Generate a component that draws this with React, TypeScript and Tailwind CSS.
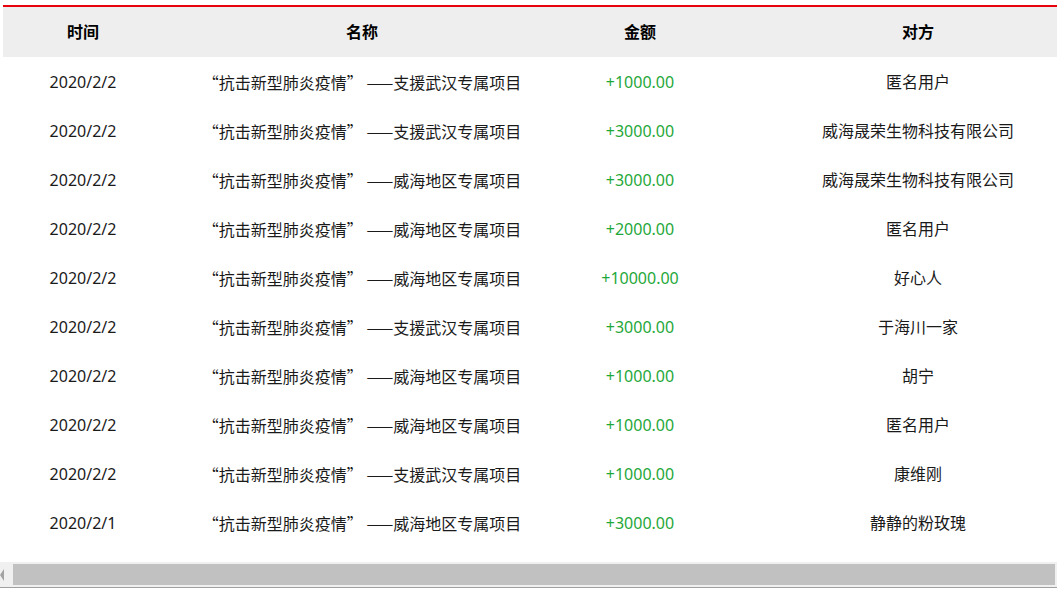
const rows = [
  { date: "2020/2/2", name: "“抗击新型肺炎疫情” ——支援武汉专属项目", amount: "+1000.00", party: "匿名用户" },
  { date: "2020/2/2", name: "“抗击新型肺炎疫情” ——支援武汉专属项目", amount: "+3000.00", party: "威海晟荣生物科技有限公司" },
  { date: "2020/2/2", name: "“抗击新型肺炎疫情” ——威海地区专属项目", amount: "+3000.00", party: "威海晟荣生物科技有限公司" },
  { date: "2020/2/2", name: "“抗击新型肺炎疫情” ——威海地区专属项目", amount: "+2000.00", party: "匿名用户" },
  { date: "2020/2/2", name: "“抗击新型肺炎疫情” ——威海地区专属项目", amount: "+10000.00", party: "好心人" },
  { date: "2020/2/2", name: "“抗击新型肺炎疫情” ——支援武汉专属项目", amount: "+3000.00", party: "于海川一家" },
  { date: "2020/2/2", name: "“抗击新型肺炎疫情” ——威海地区专属项目", amount: "+1000.00", party: "胡宁" },
  { date: "2020/2/2", name: "“抗击新型肺炎疫情” ——威海地区专属项目", amount: "+1000.00", party: "匿名用户" },
  { date: "2020/2/2", name: "“抗击新型肺炎疫情” ——支援武汉专属项目", amount: "+1000.00", party: "康维刚" },
  { date: "2020/2/1", name: "“抗击新型肺炎疫情” ——威海地区专属项目", amount: "+3000.00", party: "静静的粉玫瑰" },
];

export default function App() {
  return (
    <div
      className="w-[1057px] h-[589px] overflow-hidden bg-white text-[#1a1a1a]"
      style={{ fontFamily: '"Noto Sans", "Noto Sans CJK SC", sans-serif' }}
    >
      <div className="pt-[5px] pl-[3px] h-[562px] overflow-hidden">
        <div className="w-[1114px] border-t-2 border-[#e8000b]">
          <table className="w-[1114px] table-fixed border-collapse text-[16px]">
            <colgroup>
              <col className="w-[160px]" />
              <col className="w-[398px]" />
              <col className="w-[158px]" />
              <col className="w-[398px]" />
            </colgroup>
            <thead>
              <tr className="h-[50px] bg-[#eeeeee] font-bold text-black">
                <th className="text-center">时间</th>
                <th className="text-center">名称</th>
                <th className="text-center">金额</th>
                <th className="text-center">对方</th>
              </tr>
            </thead>
            <tbody>
              {rows.map((row, i) => (
                <tr key={i} className="h-[49px]">
                  <td className="text-center">{row.date}</td>
                  <td
                    className="text-center whitespace-nowrap"
                    style={{ fontFamily: '"Noto Sans CJK SC", sans-serif' }}
                  >
                    {row.name}
                  </td>
                  <td className="text-center text-[#1fa83a]">{row.amount}</td>
                  <td className="text-center whitespace-nowrap">{row.party}</td>
                </tr>
              ))}
            </tbody>
          </table>
        </div>
      </div>
      {/* fake horizontal scrollbar */}
      <div className="h-[26px] bg-[#f0f0f0] border-b border-[#a0a0a0] flex items-center">
        <div className="w-[13px] h-full flex items-center">
          <div className="w-0 h-0 border-y-[6px] border-y-transparent border-r-[4px] border-r-[#a3a3a3]" />
        </div>
        <div className="flex-1 h-[21px] bg-[#c1c1c1] mr-[2px]" />
      </div>
    </div>
  );
}
